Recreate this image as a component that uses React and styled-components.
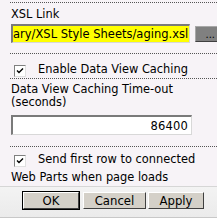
import React from "react";
import styled, { createGlobalStyle } from "styled-components";

const Global = createGlobalStyle`
  html, body { margin: 0; padding: 0; }
  body {
    background: #f7f3f7;
    font-family: "DejaVu Sans", Verdana, sans-serif;
    font-size: 11.4px;
    color: #000;
    overflow: hidden;
    width: 217px;
    height: 218px;
  }
`;

const Panel = styled.div`
  width: 217px;
  height: 218px;
  display: flex;
  flex-direction: column;
  padding-top: 2px;
  box-sizing: border-box;
`;

const Section = styled.div`
  box-sizing: border-box;
  height: ${(p) => p.$h}px;
  margin-left: 10px;
  border-top: 1px dotted #555;
  padding: ${(p) => p.$pad};
  display: flex;
  flex-direction: column;
  gap: ${(p) => p.$gap || "0px"};
  flex-shrink: 0;
`;

const Label = styled.div`
  line-height: 13px;
`;

const InputRow = styled.div`
  display: flex;
  align-items: center;
  gap: 5px;
`;

const TextBox = styled.div`
  box-sizing: border-box;
  width: 181px;
  height: ${(p) => p.$h || 19}px;
  background: ${(p) => (p.$highlight ? "#ffff00" : "#ffffff")};
  border-top: 2px solid #7a7a7a;
  border-left: 2px solid #7a7a7a;
  border-right: 1px solid #d8d8d8;
  border-bottom: 1px solid #d8d8d8;
  display: flex;
  align-items: center;
  justify-content: ${(p) => (p.$right ? "flex-end" : "flex-start")};
  padding: 0 ${(p) => (p.$right ? 3 : 0)}px 0 0;
  white-space: nowrap;
  overflow: hidden;
  font-size: 11.5px;
  letter-spacing: ${(p) => (p.$right ? "0.2px" : "0")};
`;

const Caret = styled.span`
  display: inline-block;
  flex-shrink: 0;
  width: 1px;
  height: 14px;
  background: #000;
  margin-left: 1px;
`;

const BrowseButton = styled.div`
  box-sizing: border-box;
  width: 22px;
  height: 16px;
  background: #808080;
  border-top: 1px solid #a8a8a8;
  border-left: 1px solid #a8a8a8;
  border-bottom: 1px solid #404040;
  display: flex;
  align-items: flex-end;
  justify-content: flex-end;
  padding: 0 2px 2px 0;
  line-height: 8px;
  font-size: 10px;
  flex-shrink: 0;
`;

const CheckRow = styled.div`
  line-height: ${(p) => p.$lh || 16}px;
  padding-left: 1px;
`;

const Box = styled.span`
  display: inline-flex;
  align-items: center;
  justify-content: center;
  box-sizing: border-box;
  width: 12px;
  height: 12px;
  background: #fff;
  border-top: 1px solid #808080;
  border-left: 1px solid #808080;
  border-right: 1px solid #e0e0e0;
  border-bottom: 1px solid #e0e0e0;
  vertical-align: -2px;
  margin: 0 12px 0 3px;
`;

const Footer = styled.div`
  margin-top: auto;
  height: 32px;
  box-sizing: border-box;
  border-top: 1px solid #d6d6d6;
  border-bottom: 1px solid #c8c8c8;
  background: linear-gradient(#f3f3f3, #ebebeb);
  display: flex;
  align-items: flex-start;
  padding: 5px 0 0 23px;
  gap: 2px;
`;

const Button = styled.div`
  box-sizing: border-box;
  height: 17px;
  width: ${(p) => p.$w}px;
  background: #d4d0c8;
  border-top: 1px solid #fff;
  border-left: 1px solid #fff;
  border-right: 1px solid #404040;
  border-bottom: 1px solid #404040;
  outline: ${(p) => (p.$default ? "1px solid #000" : "none")};
  display: flex;
  align-items: center;
  justify-content: center;
  font-size: 11.7px;
  margin-right: ${(p) => (p.$default ? "2px" : "0")};
`;

const Check = () => (
  <svg width="8" height="8" viewBox="0 0 8 8">
    <path d="M1 3.5 L3 5.5 L7 1.5" stroke="#000" strokeWidth="1.4" fill="none" />
  </svg>
);

export default function App() {
  return (
    <>
      <Global />
      <Panel>
        <Section $h={51} $pad="5px 0 0 1px" $gap="3px">
          <Label>XSL Link</Label>
          <InputRow>
            <TextBox $highlight>
              ary/XSL Style Sheets/aging.xsl
              <Caret />
            </TextBox>
            <BrowseButton>...</BrowseButton>
          </InputRow>
        </Section>
        <Section $h={25} $pad="7px 0 0 0">
          <CheckRow>
            <Box>
              <Check />
            </Box>
            Enable Data View Caching
          </CheckRow>
        </Section>
        <Section $h={68} $pad="4px 0 0 1px" $gap="6px">
          <Label>
            Data View Caching Time-out
            <br />
            (seconds)
          </Label>
          <TextBox $right $h={20}>86400</TextBox>
        </Section>
        <Section $h={38} $pad="3px 0 0 0">
          <CheckRow $lh={18}>
            <Box>
              <Check />
            </Box>
            Send first row to connected Web Parts when page loads
          </CheckRow>
        </Section>
        <Footer>
          <Button $w={56} $default>OK</Button>
          <Button $w={63}>Cancel</Button>
          <Button $w={56}>Apply</Button>
        </Footer>
      </Panel>
    </>
  );
}
